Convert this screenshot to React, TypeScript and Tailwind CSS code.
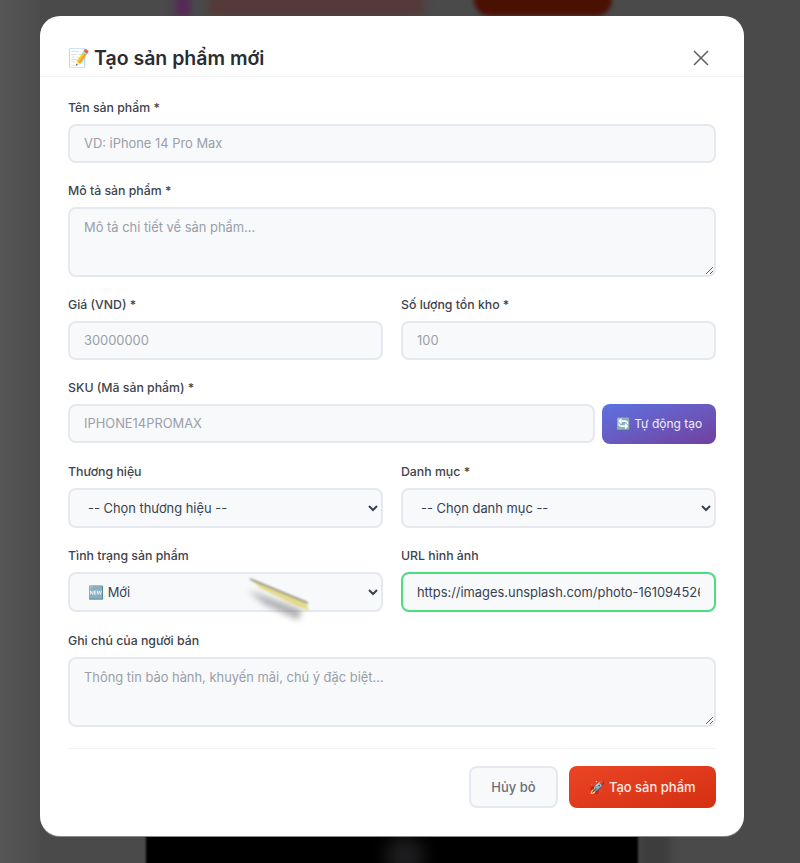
const inputClass =
  "h-[39px] w-full rounded-lg border-2 border-[#e5e8ee] bg-[#f8f9fb] px-[14px] text-[12.9px] text-[#374151] outline-none placeholder:text-[#9a9fa8]"
const textareaClass =
  "block h-[70px] w-full rounded-lg border-2 border-[#e5e8ee] bg-[#f8f9fb] px-[14px] py-[9px] text-[12.9px] text-[#374151] outline-none placeholder:text-[#9a9fa8]"
const selectClass =
  "h-[40px] w-full rounded-lg border-2 border-[#e5e8ee] bg-[#f8f9fb] px-[14px] text-[12.9px] text-[#374151] outline-none"

function Field({ label, children, className = "" }: { label: string; children: React.ReactNode; className?: string }) {
  return (
    <div className={className}>
      <label className="mb-[8px] block text-[12.3px] leading-[16px] font-medium text-[#3f444d]">{label}</label>
      {children}
    </div>
  )
}

export default function App() {
  return (
    <div className="relative flex h-[863px] justify-center overflow-hidden bg-[#4a4a4a] pt-4 pr-4 font-['Inter',sans-serif]">
      {/* page behind the overlay, blurred */}
      <div className="absolute top-0 left-0 h-full w-[40px] bg-gradient-to-r from-[#565656] to-[#4c4c4c]" />
      <div className="absolute top-[-6px] left-[176px] h-[24px] w-[14px] bg-[#562658] blur-[4px]" />
      <div className="absolute top-[-6px] left-[208px] h-[22px] w-[216px] bg-[#543a38] blur-[4px]" />
      <div className="absolute top-[-20px] left-[474px] h-[36px] w-[138px] rounded-2xl bg-[#4a1003] blur-[2px]" />
      <div className="absolute top-[830px] left-[640px] h-[40px] w-[30px] bg-[#3d3d3d] blur-[3px]" />
      <div className="absolute top-[820px] left-[146px] h-[60px] w-[492px] bg-black blur-[1px]" />
      <div className="absolute top-[836px] left-[385px] h-[40px] w-[40px] rounded-full bg-[#1c1b1d] blur-[8px]" />

      <div className="relative flex h-[820px] w-[704px] flex-col rounded-[20px] bg-white shadow-[0_1px_0_#8a8a8a]">
        <div className="flex h-[61px] shrink-0 items-center justify-between border-b border-[#f1f3f6] px-[28px] pt-6">
          <h2 className="flex items-center gap-[4px] text-[19.5px] leading-[26px] font-semibold text-[#2a2d33]">
            <span className="text-[17.5px]">📝</span>
            <span>Tạo sản phẩm mới</span>
          </h2>
          <svg viewBox="0 0 16 16" className="mr-[7px] h-4 w-4 text-[#5b5f66]" fill="none" stroke="currentColor" strokeWidth="1.500">
            <path d="M1 1l14 14M15 1L1 15" />
          </svg>
        </div>

        <form className="flex flex-col px-[28px] pt-[23px]">
          <Field label="Tên sản phẩm *">
            <input className={inputClass} placeholder="VD: iPhone 14 Pro Max" />
          </Field>
          <Field label="Mô tả sản phẩm *" className="mt-[20px]">
            <textarea className={textareaClass} placeholder="Mô tả chi tiết về sản phẩm..." />
          </Field>
          <div className="mt-[20px] grid grid-cols-2 gap-[18px]">
            <Field label="Giá (VND) *">
              <input className={inputClass} placeholder="30000000" />
            </Field>
            <Field label="Số lượng tồn kho *">
              <input className={inputClass} placeholder="100" />
            </Field>
          </div>
          <Field label="SKU (Mã sản phẩm) *" className="mt-[20px]">
            <div className="flex gap-[7px]">
              <input className={inputClass + " flex-1"} placeholder="IPHONE14PROMAX" />
              <button
                type="button"
                className="h-[40px] w-[114px] shrink-0 rounded-lg bg-gradient-to-br from-[#5a72e0] to-[#70409f] text-xs text-[#eef0fa]"
              >
                🔄 Tự động tạo
              </button>
            </div>
          </Field>
          <div className="mt-[20px] grid grid-cols-2 gap-[18px]">
            <Field label="Thương hiệu">
              <select className={selectClass}>
                <option>-- Chọn thương hiệu --</option>
              </select>
            </Field>
            <Field label="Danh mục *">
              <select className={selectClass}>
                <option>-- Chọn danh mục --</option>
              </select>
            </Field>
          </div>
          <div className="mt-[20px] grid grid-cols-2 gap-[18px]">
            <Field label="Tình trạng sản phẩm">
              <div className="relative">
                <select className={selectClass}>
                  <option>🆕 Mới</option>
                </select>
                <svg viewBox="0 0 70 50" className="pointer-events-none absolute top-[2px] left-[172px] h-[50px] w-[70px] overflow-visible">
                  <defs>
                    <filter id="soft" x="-30%" y="-30%" width="160%" height="160%">
                      <feGaussianBlur stdDeviation="3" />
                    </filter>
                    <filter id="edge" x="-10%" y="-20%" width="120%" height="140%">
                      <feGaussianBlur stdDeviation="0.9" />
                    </filter>
                  </defs>
                  <path d="M8 16L62 36 58 46 24 30z" fill="#6f6f6f" opacity="0.55" filter="url(#soft)" />
                  <path d="M12 6L66 28 69 37 52 30 20 14z" fill="#e3da8e" filter="url(#edge)" />
                  <path d="M10 5L68 29" stroke="#5c5c50" strokeWidth="1.200" filter="url(#edge)" />
                </svg>
              </div>
            </Field>
            <Field label="URL hình ảnh">
              <input
                className="h-[40px] w-full rounded-lg border-2 border-[#4ade80] bg-[#f8f9fb] px-[14px] text-[12.9px] text-[#374151] outline-none"
                defaultValue="https://images.unsplash.com/photo-1610945265064-0e34e5519bbf"
              />
            </Field>
          </div>
          <Field label="Ghi chú của người bán" className="mt-[21px]">
            <textarea className={textareaClass} placeholder="Thông tin bảo hành, khuyến mãi, chú ý đặc biệt..." />
          </Field>
          <div className="mt-[21px] flex justify-end gap-[11px] border-t border-[#f1f3f6] pt-[17px]">
            <button
              type="button"
              className="h-[42px] w-[89px] rounded-lg border-2 border-[#e5e8ee] bg-[#f8f9fb] pt-[2px] text-[13px] font-medium text-[#6b7078]"
            >
              Hủy bỏ
            </button>
            <button
              type="button"
              className="h-[42px] w-[147px] rounded-lg bg-gradient-to-br from-[#ea4525] to-[#d42f10] pt-[2px] text-[13px] font-medium text-[#fbe9e4]"
            >
              🚀 Tạo sản phẩm
            </button>
          </div>
        </form>
      </div>
    </div>
  )
}
